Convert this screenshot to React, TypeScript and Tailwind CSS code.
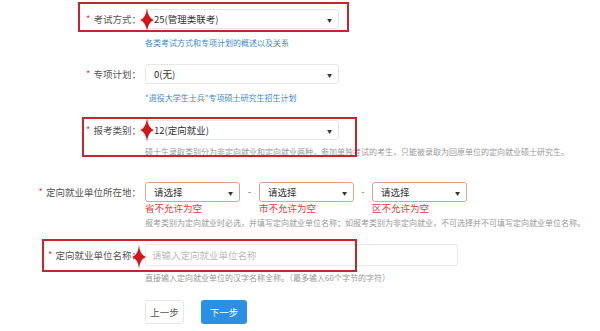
import React from 'react'

const font = { fontFamily: '"Noto Sans CJK SC", "Noto Sans", sans-serif' }

const Arrow = () => <span className="text-[5px] text-[#333] leading-none">▼</span>

const Label: React.FC<{ text: string }> = ({ text }) => (
  <div className="w-[141px] shrink-0 text-right text-[9.5px] leading-[20px] text-[#555] whitespace-nowrap">
    <span className="text-[#e4393c] mr-[3px]">*</span>
    {text}
  </div>
)

const Select: React.FC<{ value: string; width: string; error?: boolean }> = ({ value, width, error }) => (
  <div
    className={`${width} h-[20px] flex items-center justify-between pl-[8px] pr-[6px] rounded-[3px] border bg-white text-[9.5px] text-[#333] ${
      error ? 'border-[#d9a68e]' : 'border-[#e6e6e6]'
    }`}
  >
    <span>{value}</span>
    <Arrow />
  </div>
)

// red annotation star
const Star: React.FC<{ x: number; y: number }> = ({ x, y }) => (
  <svg
    className="absolute"
    style={{ left: x - 8, top: y - 13 }}
    width="16"
    height="26"
    viewBox="-8 -13 16 26"
  >
    <path d="M0,-12 Q1,-2 7,0 Q1,2 0,12 Q-1,2 -7,0 Q-1,-2 0,-12 Z" fill="#d0181c" />
  </svg>
)

export default function App() {
  return (
    <div className="relative w-[600px] h-[331px] overflow-hidden bg-white" style={font}>
      <div className="pt-[9px]">
        {/* 考试方式 */}
        <div className="flex items-start">
          <Label text="考试方式：" />
          <div className="ml-[4px]">
            <Select value="25(管理类联考)" width="w-[194px]" />
            <div className="mt-[9px] text-[8px] leading-[10px] text-[#3a8bd3]">各类考试方式和专项计划的概述以及关系</div>
          </div>
        </div>

        {/* 专项计划 */}
        <div className="flex items-start mt-[16px]">
          <Label text="专项计划：" />
          <div className="ml-[4px]">
            <Select value="0(无)" width="w-[194px]" />
            <div className="mt-[9px] text-[8px] leading-[10px] text-[#3a8bd3]">"退役大学生士兵"专项硕士研究生招生计划</div>
          </div>
        </div>

        {/* 报考类别 */}
        <div className="flex items-start mt-[17px]">
          <Label text="报考类别：" />
          <div className="ml-[4px]">
            <Select value="12(定向就业)" width="w-[194px]" />
            <div className="mt-[7px] text-[8px] leading-[10px] text-[#999] whitespace-nowrap">
              硕士生录取类别分为非定向就业和定向就业两种，参加单独考试的考生，只能被录取为回原单位的定向就业硕士研究生。
            </div>
          </div>
        </div>

        {/* 定向就业单位所在地 */}
        <div className="flex items-start mt-[25px]">
          <Label text="定向就业单位所在地：" />
          <div className="ml-[4px]">
            <div className="flex items-start">
              <div>
                <Select value="请选择" width="w-[95px]" error />
                <div className="mt-[1px] text-[9.5px] leading-[10px] text-[#e4393c]">省不允许为空</div>
              </div>
              <div className="w-[19px] text-center text-[9px] leading-[20px] text-[#666]">-</div>
              <div>
                <Select value="请选择" width="w-[95px]" error />
                <div className="mt-[1px] text-[9.5px] leading-[10px] text-[#e4393c]">市不允许为空</div>
              </div>
              <div className="w-[18px] text-center text-[9px] leading-[20px] text-[#666]">-</div>
              <div>
                <Select value="请选择" width="w-[95px]" error />
                <div className="mt-[1px] text-[9.5px] leading-[10px] text-[#e4393c]">区不允许为空</div>
              </div>
            </div>
            <div className="mt-[5px] text-[8px] leading-[10px] text-[#999] whitespace-nowrap">
              报考类别为定向就业时必选，并填写定向就业单位名称；如报考类别为非定向就业，不可选择并不可填写定向就业单位名称。
            </div>
          </div>
        </div>

        {/* 定向就业单位名称 */}
        <div className="flex items-start mt-[16px]">
          <div className="w-[141px] shrink-0 text-right text-[9.5px] leading-[22px] text-[#555] whitespace-nowrap">
            <span className="text-[#e4393c] mr-[3px]">*</span>
            定向就业单位名称：
          </div>
          <div className="ml-[4px]">
            <div className="w-[313px] h-[22px] flex items-center pl-[6px] rounded-[3px] border border-[#e8e8e8] text-[9.5px] text-[#bbb]">
              请输入定向就业单位名称
            </div>
            <div className="mt-[7px] text-[8px] leading-[10px] text-[#999] whitespace-nowrap">
              直接输入定向就业单位的汉字名称全称。（最多输入60个字节的字符）
            </div>
          </div>
        </div>

        {/* buttons */}
        <div className="flex mt-[17px] pl-[145px] gap-[17px]">
          <button className="w-[39px] h-[24px] rounded-[3px] border border-[#e6e6e6] bg-white text-[9.5px] text-[#555]">上一步</button>
          <button className="w-[46px] h-[24px] rounded-[3px] bg-[#2b8fe3] text-[9.5px] text-white">下一步</button>
        </div>
      </div>

      {/* annotation boxes */}
      <div className="absolute left-[78px] top-[2px] w-[271px] h-[30px] border-2 border-[#c1272d]" />
      <div className="absolute left-[82px] top-[117px] w-[275px] h-[40px] border-2 border-[#c1272d]" />
      <div className="absolute left-[42px] top-[239px] w-[315px] h-[33px] border-2 border-[#c1272d]" />

      <Star x={147} y={20} />
      <Star x={147} y={130} />
      <Star x={139} y={257} />
    </div>
  )
}
